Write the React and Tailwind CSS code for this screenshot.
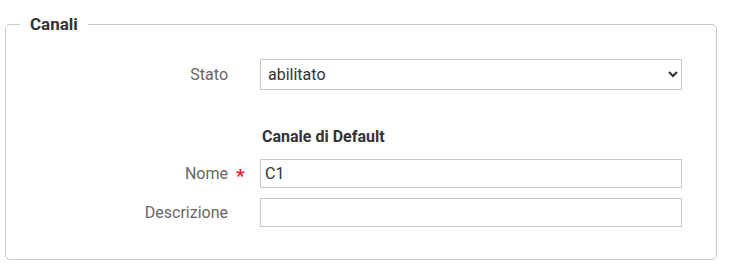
import React from "react";

export default function App() {
  return (
    <div className="bg-white w-[731px] h-[275px] pt-[14px] pl-[5px]" style={{ fontFamily: "Roboto, 'Liberation Sans', sans-serif" }}>
      <fieldset className="w-[712px] border border-[#c8c8c8] rounded-[5px] pb-[32px]">
        <legend className="ml-[14px] px-[10px] text-[17px] leading-[20px] font-bold text-[#333]">Canali</legend>
        <div className="flex flex-col">
          <div className="flex items-center mt-[25px]">
            <label className="w-[222px] text-right text-[16px] text-[#666]">Stato</label>
            <select
              defaultValue="abilitato"
              className="ml-[32px] w-[422px] h-[31px] border border-[#c8c8c8] bg-white pl-[3px] text-[16px] text-[#333]"
            >
              <option value="abilitato">abilitato</option>
              <option value="disabilitato">disabilitato</option>
            </select>
          </div>
          <div className="flex mt-[37px]">
            <div className="w-[222px]" />
            <div className="ml-[34px] text-[16px] leading-[20px] font-bold text-[#333]">Canale di Default</div>
          </div>
          <div className="flex items-center mt-[12px]">
            <label className="relative w-[222px] text-right text-[16px] text-[#666]">
              Nome
              <span className="absolute left-[230px] top-[4px] text-[19px] leading-[20px] font-bold text-[#ee1c2e]">*</span>
            </label>
            <input
              defaultValue="C1"
              className="ml-[32px] w-[422px] h-[29px] border border-[#c8c8c8] bg-white px-[4px] text-[16px] text-[#333] outline-none"
            />
          </div>
          <div className="flex items-center mt-[10px]">
            <label className="w-[222px] text-right text-[16px] text-[#666]">Descrizione</label>
            <input
              defaultValue=""
              className="ml-[32px] w-[422px] h-[29px] border border-[#c8c8c8] bg-white px-[4px] text-[16px] text-[#333] outline-none"
            />
          </div>
        </div>
      </fieldset>
    </div>
  );
}
